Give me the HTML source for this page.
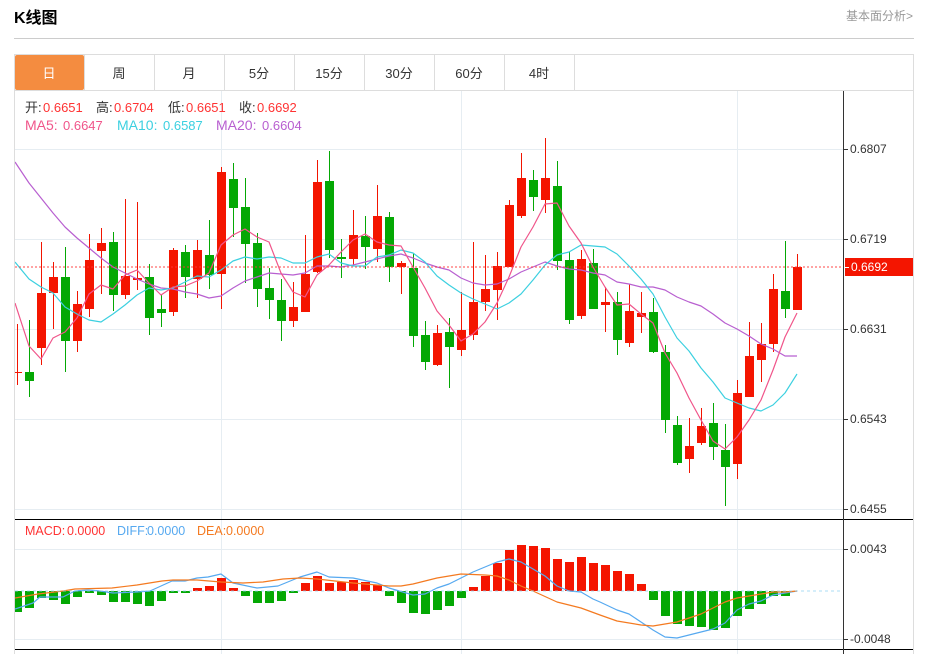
<!DOCTYPE html>
<html lang="zh"><head><meta charset="utf-8"><title>K线图</title>
<style>html,body{margin:0;padding:0;background:#fff}svg{display:block}text{font-family:"Liberation Sans","Noto Sans CJK SC",sans-serif}</style></head>
<body><svg xmlns="http://www.w3.org/2000/svg" width="931" height="654" viewBox="0 0 931 654">
<defs><clipPath id="c"><rect x="15" y="91" width="828" height="563"/></clipPath></defs>
<text x="14" y="23" font-size="16" font-weight="700" fill="#000">K线图</text>
<text x="846" y="20" font-size="12" fill="#999">基本面分析&gt;</text>
<path d="M14 38.5H914" stroke="#ccc" fill="none"/>
<g fill="none" stroke="#ddd" shape-rendering="crispEdges">
<path d="M14.5 54V654M913.5 54V654M14 54.5H914M14 90.5H914M84.5 55V90M154.5 55V90M224.5 55V90M294.5 55V90M364.5 55V90M434.5 55V90M504.5 55V90M574.5 55V90"/>
</g>
<rect x="15" y="55" width="69" height="35" rx="2" fill="#f48c40"/>
<g font-size="13" fill="#333" text-anchor="middle">
<text x="49" y="78" fill="#fff">日</text><text x="119" y="78">周</text><text x="189" y="78">月</text><text x="259" y="78">5分</text><text x="329" y="78">15分</text><text x="399" y="78">30分</text><text x="469" y="78">60分</text><text x="539" y="78">4时</text>
</g>
<g stroke="#e6edf2" fill="none" shape-rendering="crispEdges">
<path d="M15 149.5H843M15 239.5H843M15 329.5H843M15 419.5H843M15 509.5H843M15 549.5H843M15 639.5H843M221.5 91V654M461.5 91V654M737.5 91V654"/>
</g>
<g clip-path="url(#c)">
<g fill="none" stroke="#f21400" shape-rendering="crispEdges">
<path d="M17.5 324V385M41.5 242V365M53.5 262V329M77.5 291V352M89.5 234V317M101.5 228V294M125.5 199V299M137.5 202V290M173.5 248V316M197.5 240V298M221.5 167V309M293.5 282V327M305.5 235V312M317.5 160V273M353.5 210V266M377.5 185V262M401.5 261V294M437.5 325V366M461.5 292V356M473.5 242V340M485.5 255V311M497.5 252V320M509.5 200V267M521.5 153V218M545.5 138V213M581.5 250V319M605.5 287V332M629.5 284V347M641.5 292V333M689.5 418V473M701.5 408V445M737.5 380V479M749.5 322V397M761.5 323V382M773.5 274V352M797.5 254V309"/>
</g>
<g fill="none" stroke="#04a804" shape-rendering="crispEdges">
<path d="M29.5 320V397M65.5 247V372M113.5 232V311M149.5 264V335M161.5 295V327M185.5 245V298M209.5 220V289M233.5 163V237M245.5 178V283M257.5 233V307M269.5 268V319M281.5 279V341M329.5 151V258M341.5 239V278M365.5 216V269M389.5 212V282M413.5 253V347M425.5 321V370M449.5 318V388M533.5 170V211M557.5 161V270M569.5 252V324M593.5 249V309M617.5 292V355M653.5 298V353M665.5 345V433M677.5 416V465M713.5 403V460M725.5 424V506M785.5 241V318"/>
</g>
<g fill="#f41500" shape-rendering="crispEdges">
<path d="M13 372h9v1h-9zM37 293h9v55h-9zM49 277h9v16h-9zM73 304h9v37h-9zM85 260h9v49h-9zM97 243h9v8h-9zM121 276h9v19h-9zM133 278h9v2h-9zM169 250h9v62h-9zM193 250h9v29h-9zM217 172h9v102h-9zM289 307h9v14h-9zM301 274h9v38h-9zM313 182h9v90h-9zM349 235h9v24h-9zM373 216h9v33h-9zM397 263h9v4h-9zM433 333h9v32h-9zM457 330h9v20h-9zM469 302h9v33h-9zM481 289h9v13h-9zM493 266h9v24h-9zM505 205h9v62h-9zM517 178h9v38h-9zM541 178h9v22h-9zM577 259h9v57h-9zM601 302h9v3h-9zM625 311h9v32h-9zM637 313h9v4h-9zM685 446h9v13h-9zM697 426h9v17h-9zM733 393h9v71h-9zM745 356h9v41h-9zM757 344h9v16h-9zM769 289h9v55h-9zM793 267h9v43h-9z"/>
<path d="M193 588h9v3h-9zM205 586h9v5h-9zM217 578h9v13h-9zM229 588h9v3h-9zM301 583h9v8h-9zM313 576h9v15h-9zM325 583h9v8h-9zM337 582h9v9h-9zM349 580h9v11h-9zM361 582h9v9h-9zM373 585h9v6h-9zM469 587h9v4h-9zM481 576h9v15h-9zM493 563h9v28h-9zM505 550h9v41h-9zM517 545h9v46h-9zM529 546h9v45h-9zM541 548h9v43h-9zM553 559h9v32h-9zM565 562h9v29h-9zM577 557h9v34h-9zM589 563h9v28h-9zM601 565h9v26h-9zM613 571h9v20h-9zM625 574h9v17h-9zM637 584h9v7h-9z"/>
</g>
<g fill="#04a804" shape-rendering="crispEdges">
<path d="M25 372h9v9h-9zM61 277h9v64h-9zM109 242h9v53h-9zM145 277h9v41h-9zM157 309h9v4h-9zM181 252h9v25h-9zM205 255h9v20h-9zM229 179h9v29h-9zM241 207h9v37h-9zM253 243h9v46h-9zM265 288h9v12h-9zM277 300h9v21h-9zM325 181h9v69h-9zM337 257h9v2h-9zM361 236h9v11h-9zM385 217h9v50h-9zM409 268h9v68h-9zM421 335h9v27h-9zM445 332h9v15h-9zM529 180h9v17h-9zM553 186h9v75h-9zM565 260h9v60h-9zM589 263h9v46h-9zM613 302h9v38h-9zM649 312h9v40h-9zM661 352h9v68h-9zM673 425h9v38h-9zM709 423h9v24h-9zM721 450h9v17h-9zM781 291h9v18h-9z"/>
<path d="M13 591h9v21h-9zM25 591h9v17h-9zM37 591h9v7h-9zM49 591h9v9h-9zM61 591h9v13h-9zM73 591h9v6h-9zM85 591h9v2h-9zM97 591h9v4h-9zM109 591h9v11h-9zM121 591h9v11h-9zM133 591h9v13h-9zM145 591h9v15h-9zM157 591h9v10h-9zM169 591h9v2h-9zM181 591h9v2h-9zM241 591h9v5h-9zM253 591h9v12h-9zM265 591h9v12h-9zM277 591h9v10h-9zM289 591h9v2h-9zM385 591h9v5h-9zM397 591h9v12h-9zM409 591h9v22h-9zM421 591h9v23h-9zM433 591h9v19h-9zM445 591h9v15h-9zM457 591h9v7h-9zM649 591h9v9h-9zM661 591h9v25h-9zM673 591h9v33h-9zM685 591h9v35h-9zM697 591h9v36h-9zM709 591h9v39h-9zM721 591h9v37h-9zM733 591h9v25h-9zM745 591h9v18h-9zM757 591h9v13h-9zM769 591h9v5h-9zM781 591h9v5h-9z"/>
</g>
<g fill="none" stroke-width="1.2" stroke-linejoin="round">
<path stroke="#b85fd0" d="M15 162L29 183L41 198L53 213L65 227L77 238L89 248L101 258L113 267L125 273L137 279L149 284L161 288L173 289L185 292L197 294L209 298L221 296L233 288L245 281L257 277L269 273L281 274L293 275L305 273L317 266L329 266L341 267L353 265L365 262L377 259L389 256L401 254L413 258L425 263L437 267L449 270L461 278L473 283L485 285L497 284L509 279L521 272L533 267L545 262L557 266L569 269L581 270L593 273L605 275L617 282L629 284L641 287L653 287L665 290L677 297L689 302L701 306L713 314L725 323L737 329L749 336L761 344L773 349L785 356L797 356"/>
<path stroke="#3cd0e0" d="M15 262L29 279L41 287L53 293L65 307L77 314L89 320L101 322L113 314L125 305L137 295L149 288L161 290L173 288L185 282L197 276L209 277L221 270L233 261L245 257L257 259L269 257L281 258L293 263L305 263L317 257L329 254L341 263L353 266L365 266L377 257L389 255L401 250L413 253L425 262L437 276L449 285L461 293L473 299L485 304L497 309L509 303L521 294L533 280L545 265L557 255L569 252L581 245L593 246L605 247L617 254L629 266L641 279L653 294L665 317L677 338L689 351L701 368L713 382L725 398L737 403L749 408L761 411L773 405L785 393L797 374"/>
<path stroke="#f0558a" d="M15 303L29 346L41 359L53 338L65 332L77 318L89 294L101 285L113 289L125 275L137 270L149 283L161 295L173 287L185 286L197 281L209 273L221 245L233 235L245 229L257 237L269 242L281 273L293 292L305 297L317 275L329 265L341 252L353 240L365 234L377 242L389 245L401 246L413 267L425 288L437 311L449 325L461 341L473 334L485 322L497 303L509 277L521 247L533 227L545 204L557 203L569 226L581 243L593 267L605 287L617 305L629 304L641 314L653 323L665 353L677 373L689 398L701 420L713 441L725 449L737 437L749 420L761 400L773 370L785 337L797 313"/>
<path stroke="#56a9f0" d="M15 609L33 603L40 597L63 597L75 591L88 590L100 591L113 593L137 592L150 591L172 581L185 581L197 578L208 577L221 574L233 583L257 588L278 586L300 577L317 572L329 577L353 578L377 583L389 588L413 595L425 594L437 588L449 584L461 578L473 572L485 567L497 562L509 559L521 562L545 576L557 586L569 591L581 592L593 599L600 602L617 610L629 614L641 622L653 630L665 637L677 638L689 635L701 632L713 629L725 623L737 610L749 604L761 601L773 595L785 593L797 591"/>
<path stroke="#f47a20" d="M15 598L38 594L63 591L75 589L112 588L137 585L162 581L173 580L197 580L221 582L243 583L263 582L283 579L300 578L317 579L353 583L377 585L389 586L401 586L413 584L437 578L461 574L485 575L497 576L509 580L521 586L533 591L557 602L581 608L600 615L617 621L641 625L653 626L665 624L677 622L689 618L701 614L713 608L725 602L737 598L749 596L761 594L773 592L785 592L797 591"/>
</g>
<path d="M15 267H843" fill="none" stroke="#f33" stroke-opacity=".6" stroke-width="1.5" stroke-dasharray="2 2"/>
<path d="M15 591H843" fill="none" stroke="#8fd0f0" stroke-opacity=".75" stroke-width="1" stroke-dasharray="3 3"/>
</g>
<g fill="none" stroke="#000" shape-rendering="crispEdges">
<path d="M15 519.5H913M15 649.5H913"/>
</g>
<g fill="none" stroke="#333" shape-rendering="crispEdges">
<path d="M843.5 91V654M843 149.5H848M843 239.5H848M843 329.5H848M843 419.5H848M843 509.5H848M843 549.5H848M843 639.5H848"/>
</g>
<rect x="845" y="258" width="68" height="18" fill="#f41500"/>
<path d="M845 267.5H849" stroke="#fff" fill="none" shape-rendering="crispEdges"/>
<g font-size="12" fill="#333">
<text x="850" y="153">0.6807</text><text x="850" y="243">0.6719</text><text x="850" y="333">0.6631</text><text x="850" y="423">0.6543</text><text x="850" y="513">0.6455</text><text x="850" y="553">0.0043</text><text x="850" y="643">-0.0048</text>
<text x="851" y="271" fill="#fff">0.6692</text>
</g>
<g font-size="13" fill="#f33">
<text x="25" y="112" fill="#333">开:</text><text x="43" y="112">0.6651</text>
<text x="96" y="112" fill="#333">高:</text><text x="114" y="112">0.6704</text>
<text x="168" y="112" fill="#333">低:</text><text x="186" y="112">0.6651</text>
<text x="239" y="112" fill="#333">收:</text><text x="257" y="112">0.6692</text>
</g>
<g>
<text x="25" y="130" font-size="14" fill="#f0558a">MA5:</text><text x="63" y="130" font-size="13" fill="#f0558a">0.6647</text>
<text x="117" y="130" font-size="14" fill="#3cd0e0">MA10:</text><text x="163" y="130" font-size="13" fill="#3cd0e0">0.6587</text>
<text x="216" y="130" font-size="14" fill="#b85fd0">MA20:</text><text x="262" y="130" font-size="13" fill="#b85fd0">0.6604</text>
</g>
<g font-size="12.5">
<text x="25" y="535" fill="#f33">MACD:</text><text x="67" y="535" fill="#f33">0.0000</text>
<text x="117" y="535" fill="#56a9f0">DIFF:</text><text x="147" y="535" fill="#56a9f0">0.0000</text>
<text x="197" y="535" fill="#f47a20">DEA:</text><text x="226" y="535" fill="#f47a20">0.0000</text>
</g>
</svg></body></html>
